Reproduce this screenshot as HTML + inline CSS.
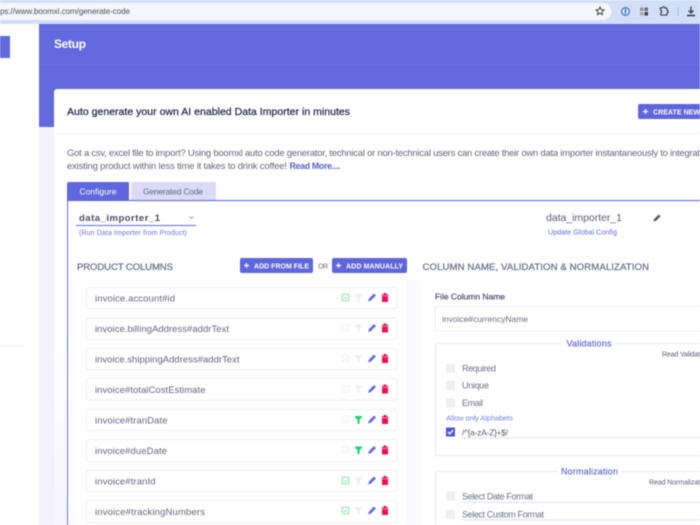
<!DOCTYPE html>
<html><head><meta charset="utf-8"><style>
html,body{margin:0;padding:0;width:700px;height:525px;overflow:hidden;background:#fff}
svg{display:block;filter:blur(.4px)}
text{font-family:"Liberation Sans",sans-serif;white-space:pre}
.r{font-size:9.5px;fill:#66667e}
.w{font-size:7px;font-weight:bold;fill:#fff}
.h{font-size:9.6px;fill:#6f728c;stroke:#6f728c;stroke-width:.25px}
.f{font-size:9px;fill:#707086}
</style></head><body>
<svg width="700" height="525" viewBox="0 0 700 525" xmlns="http://www.w3.org/2000/svg">
<defs>
<linearGradient id="g" x1="0" y1="0" x2="0" y2="1"><stop offset="0" stop-color="#fff"/><stop offset=".55" stop-color="#fff"/><stop offset="1" stop-color="#f6f5fd"/></linearGradient>
<g id="pen"><path d="M-4 4l1-3 5-5 2 2-5 5z" fill="#656ddf"/></g>
<g id="tr"><path d="M-3.500-3h7v1h-7zM-1.500-4.500h3v1.500h-3zM-3-1.500h6v6h-6z" fill="#ee0f58"/></g>
<g id="fl"><path d="M-3.500-3.500h7v1.400l-2.500 2.300v4h-2v-4l-2.500-2.300z" fill="currentColor"/></g>
<g id="cb"><rect x="-3.200" y="-3.200" width="6.400" height="6.400" fill="none" stroke="currentColor" stroke-width="1"/><path d="M-1.500 .3l1 1 2-2" fill="none" stroke="currentColor" stroke-width=".9"/></g>
</defs>

<!-- browser bar -->
<rect width="700" height="24" fill="#d3dff7"/>
<path d="M0 3H603a8.500 8.500 0 0 1 0 17H0z" fill="#f5f7fd"/>
<text x="0" y="14" font-size="8" fill="#4a4e58" textLength="130" lengthAdjust="spacing">ps://www.boomxl.com/generate-code</text>
<path d="M600 7l1.200 2.600 2.800.3-2.100 1.900.6 2.800-2.500-1.400-2.500 1.400.6-2.800-2.100-1.900 2.800-.3z" fill="none" stroke="#333" stroke-width=".9"/>
<circle cx="625.500" cy="11.500" r="3.800" fill="#eef3fd" stroke="#3d73cf" stroke-width="1.300"/><rect x="624.800" y="9" width="1.400" height="5" fill="#2f5fb8"/>
<rect x="640" y="7.500" width="3.500" height="3.500" fill="#8f939c"/><rect x="644.500" y="7.500" width="3.500" height="3.500" fill="#6c7078"/><rect x="640" y="12" width="3.500" height="3.500" fill="#a5a9b1"/><rect x="644.500" y="12" width="3.500" height="3.500" fill="#3c4047"/>
<path d="M660 8h2.200a1.200 1.200 0 0 1 2.400 0h2.400v2.500a1.200 1.200 0 0 1 0 2.400v2.100h-6.200v-2.500a1 1 0 0 0 0-2z" fill="none" stroke="#2f333a" stroke-width="1"/>
<rect x="677.500" y="7" width="1" height="9" fill="#a9bbe5"/>
<path d="M691 6.500v6M688.500 10.500l2.500 2.500 2.500-2.500" fill="none" stroke="#2c3038" stroke-width="1.200"/><path d="M687 15.500h8" stroke="#2c3038" stroke-width="1.500"/>
<rect y="20" width="700" height="3.500" fill="#d3dff7"/>

<!-- sidebar -->
<rect y="24" width="39" height="501" fill="#fff"/>
<rect y="36" width="10" height="22" fill="#626ade"/>
<rect y="345.500" width="25" height="1.200" fill="#f0f0f6"/>

<!-- header -->
<rect x="39" y="24" width="661" height="103" fill="#626ade"/>
<rect x="39" y="64" width="661" height="1" fill="#6a72e2"/>
<rect x="39" y="127" width="15" height="398" fill="#f2f1fc"/>
<text x="54" y="48" font-size="12" font-weight="bold" fill="#fff" textLength="32" lengthAdjust="spacing">Setup</text>

<!-- card -->
<path d="M54 92a3 3 0 0 1 3-3H700V525H54z" fill="url(#g)"/>
<rect x="54" y="133" width="646" height="1" fill="#f3f3f8"/>
<text x="67" y="115" font-size="10.500" fill="#20204a" textLength="283" lengthAdjust="spacing" stroke="#20204a" stroke-width=".2">Auto generate your own AI enabled Data Importer in minutes</text>
<path d="M640 104H700V119H640a2 2 0 0 1-2-2V106a2 2 0 0 1 2-2z" fill="#5f66dc"/>
<path d="M643 111.500h5M645.500 109v5" stroke="#fff" stroke-width="1.200"/>
<text x="653" y="114.500" class="w" textLength="47" lengthAdjust="spacing">CREATE NEW</text>

<text x="67" y="156" font-size="9.500" fill="#66667c" textLength="633" lengthAdjust="spacing">Got a csv, excel file to import? Using boomxl auto code generator, technical or non-technical users can create their own data importer instantaneously to integrat</text>
<text x="67" y="169" font-size="9.500" fill="#66667c" textLength="220" lengthAdjust="spacing">existing product within less time it takes to drink coffee!</text>
<text x="289.500" y="169" font-size="8.800" font-weight="bold" fill="#575fd8" textLength="51" lengthAdjust="spacing">Read More....</text>

<!-- tabs -->
<path d="M67 201V184a2 2 0 0 1 2-2H129V201z" fill="#5f67dd"/>
<path d="M131 200V184a2 2 0 0 1 2-2H214a2 2 0 0 1 2 2V200z" fill="#dcdaf6"/>
<text x="79.500" y="194.500" font-size="8.500" fill="#fff" textLength="37" lengthAdjust="spacing">Configure</text>
<text x="143" y="194.500" font-size="8.500" fill="#66667e" textLength="60" lengthAdjust="spacing">Generated Code</text>
<rect x="67" y="200" width="633" height="1.200" fill="#636ae0"/>
<rect x="67" y="200" width="1.200" height="325" fill="#7077e2"/>
<rect x="68.200" y="201.200" width="631.800" height="323.800" fill="#fff"/>
<rect x="68.200" y="280" width="339" height="245" fill="#fdfcfe"/>
<rect x="76" y="280" width="331" height="245" fill="#fefefe"/>
<rect x="407" y="280" width="15" height="245" fill="#faf9fe"/>

<!-- selector -->
<text x="79" y="221" font-size="9.500" font-weight="bold" fill="#4a4a64" textLength="81" lengthAdjust="spacing">data_importer_1</text>
<path d="M189.500 216.500l2 2 2-2" fill="none" stroke="#8a8aa0" stroke-width=".8"/>
<rect x="76" y="225" width="120" height="1" fill="#636ae0"/>
<text x="79" y="235" font-size="7" fill="#6c72e2" textLength="108" lengthAdjust="spacing">(Run Data Importer from Product)</text>
<text x="546" y="221" font-size="10.500" fill="#5c5c74" textLength="76" lengthAdjust="spacing">data_importer_1</text>
<g transform="translate(657 218) scale(.9)"><path d="M-4 4l1-3 5-5 2 2-5 5z" fill="#55556a"/></g>
<text x="548" y="234.500" font-size="7.200" fill="#646be0" textLength="69" lengthAdjust="spacing">Update Global Config</text>

<!-- section heads -->
<text x="77" y="270" class="h" textLength="96" lengthAdjust="spacing">PRODUCT COLUMNS</text>
<text x="422.500" y="270" class="h" textLength="226.500" lengthAdjust="spacing">COLUMN NAME, VALIDATION &amp; NORMALIZATION</text>
<rect x="240" y="258" width="73" height="15" rx="2" fill="#5f66dc"/>
<path d="M244 265.500h5M246.500 263v5" stroke="#fff" stroke-width="1.200"/>
<text x="254" y="268.500" class="w" textLength="55" lengthAdjust="spacing">ADD FROM FILE</text>
<text x="318" y="268.500" font-size="7" fill="#6c6c84" textLength="10" lengthAdjust="spacing">OR</text>
<rect x="332" y="258" width="75" height="15" rx="2" fill="#5f66dc"/>
<path d="M336 265.500h5M338.500 263v5" stroke="#fff" stroke-width="1.200"/>
<text x="346" y="268.500" class="w" textLength="57" lengthAdjust="spacing">ADD MANUALLY</text>

<!-- rows -->
<g fill="#fff" stroke="#efeff6" stroke-width="1">
<rect x="86.500" y="287.500" width="310.500" height="21" rx="2"/>
<rect x="86.500" y="318" width="310.500" height="21.500" rx="2"/>
<rect x="86.500" y="348.500" width="310.500" height="21" rx="2"/>
<rect x="86.500" y="378.500" width="310.500" height="21.500" rx="2"/>
<rect x="86.500" y="409.500" width="310.500" height="21" rx="2"/>
<rect x="86.500" y="439.500" width="310.500" height="22" rx="2"/>
<rect x="86.500" y="470.500" width="310.500" height="21" rx="2"/>
<rect x="86.500" y="500.500" width="310.500" height="22" rx="2"/>
</g>
<text x="95" y="301.500" class="r" textLength="80" lengthAdjust="spacing">invoice.account#id</text>
<text x="95" y="332" class="r" textLength="134" lengthAdjust="spacing">invoice.billingAddress#addrText</text>
<text x="95" y="362.500" class="r" textLength="144.500" lengthAdjust="spacing">invoice.shippingAddress#addrText</text>
<text x="95" y="393" class="r" textLength="110.500" lengthAdjust="spacing">invoice#totalCostEstimate</text>
<text x="95" y="423.500" class="r" textLength="72.500" lengthAdjust="spacing">invoice#tranDate</text>
<text x="95" y="454" class="r" textLength="72" lengthAdjust="spacing">invoice#dueDate</text>
<text x="95" y="484.500" class="r" textLength="60.500" lengthAdjust="spacing">invoice#tranId</text>
<text x="95" y="515" class="r" textLength="110" lengthAdjust="spacing">invoice#trackingNumbers</text>

<g style="color:#8fe0ae"><use href="#cb" x="345.500" y="297.500"/><use href="#cb" x="345.500" y="480.500"/><use href="#cb" x="345.500" y="510.500"/></g>
<g style="color:#f1f0f8"><use href="#cb" x="345.500" y="328"/><use href="#cb" x="345.500" y="358.500"/><use href="#cb" x="345.500" y="389"/><use href="#cb" x="345.500" y="419.500"/><use href="#cb" x="345.500" y="450"/></g>
<g style="color:#eeeef4"><use href="#fl" x="358.500" y="297.500"/><use href="#fl" x="358.500" y="328"/><use href="#fl" x="358.500" y="358.500"/><use href="#fl" x="358.500" y="389"/><use href="#fl" x="358.500" y="480.500"/><use href="#fl" x="358.500" y="510.500"/></g>
<g style="color:#17d66f"><use href="#fl" x="358.500" y="419.500"/><use href="#fl" x="358.500" y="450"/></g>
<use href="#pen" x="372" y="297.500"/><use href="#pen" x="372" y="328"/><use href="#pen" x="372" y="358.500"/><use href="#pen" x="372" y="389"/><use href="#pen" x="372" y="419.500"/><use href="#pen" x="372" y="450"/><use href="#pen" x="372" y="480.500"/><use href="#pen" x="372" y="510.500"/>
<use href="#tr" x="385" y="297.500"/><use href="#tr" x="385" y="328"/><use href="#tr" x="385" y="358.500"/><use href="#tr" x="385" y="389"/><use href="#tr" x="385" y="419.500"/><use href="#tr" x="385" y="450"/><use href="#tr" x="385" y="480.500"/><use href="#tr" x="385" y="510.500"/>

<!-- right panel -->
<text x="435" y="299.500" font-size="8.500" fill="#3a3a58" stroke="#3a3a58" stroke-width=".12" textLength="70" lengthAdjust="spacing">File Column Name</text>
<path d="M700 306.500H437a2 2 0 0 0-2 2V329a2 2 0 0 0 2 2H700" fill="#fff" stroke="#ececf3"/>
<text x="442" y="322" font-size="8.500" fill="#6c6c82" textLength="86" lengthAdjust="spacing">invoice#currencyName</text>

<path d="M700 343.500H435.500V455.500H700" fill="none" stroke="#eaeaf2"/>
<rect x="563" y="338" width="52" height="10" fill="#fff"/>
<text x="566.500" y="346.500" font-size="9" fill="#565ee0" stroke="#565ee0" stroke-width=".12" textLength="45" lengthAdjust="spacing">Validations</text>
<text x="662" y="356.500" font-size="7" fill="#606074" textLength="38" lengthAdjust="spacing">Read Validat</text>

<g fill="#efeef3">
<rect x="446" y="364" width="9" height="9"/><rect x="446" y="381" width="9" height="9"/><rect x="446" y="398.500" width="9" height="9"/>
<rect x="446" y="491.500" width="9" height="9"/><rect x="446" y="510" width="9" height="9"/>
</g>
<text x="462" y="371.500" class="f" textLength="34" lengthAdjust="spacing">Required</text>
<text x="462" y="388.500" class="f" textLength="27" lengthAdjust="spacing">Unique</text>
<text x="462" y="406" class="f" textLength="21" lengthAdjust="spacing">Email</text>
<text x="446" y="420.500" font-size="7.500" fill="#7c82e4" textLength="67" lengthAdjust="spacing">Allow only Alphabets</text>
<rect x="446" y="427.500" width="9" height="9" fill="#4f58d8"/>
<path d="M448 432l1.800 1.800 3.200-3.600" fill="none" stroke="#fff" stroke-width="1.300"/>
<text x="462" y="435.500" font-size="8.500" fill="#5c5c72" textLength="46" lengthAdjust="spacing">/^[a-zA-Z]+$/</text>
<rect x="462" y="437" width="238" height="1.500" fill="#e9e8fb"/>

<path d="M700 471.500H435.500V525" fill="none" stroke="#eaeaf2"/>
<rect x="558" y="466" width="63" height="10" fill="#fff"/>
<text x="561" y="474.500" font-size="9" fill="#565ee0" stroke="#565ee0" stroke-width=".12" textLength="57" lengthAdjust="spacing">Normalization</text>
<text x="649" y="484.500" font-size="7" fill="#606074" textLength="51" lengthAdjust="spacing">Read Normalizat</text>
<text x="462" y="499.500" class="f" textLength="71" lengthAdjust="spacing">Select Date Format</text>
<rect x="462" y="501.500" width="238" height="1.500" fill="#e9e8fb"/>
<text x="462" y="517.500" class="f" textLength="82" lengthAdjust="spacing">Select Custom Format</text>
<rect x="462" y="519" width="238" height="1.500" fill="#e9e8fb"/>
</svg>
</body></html>
